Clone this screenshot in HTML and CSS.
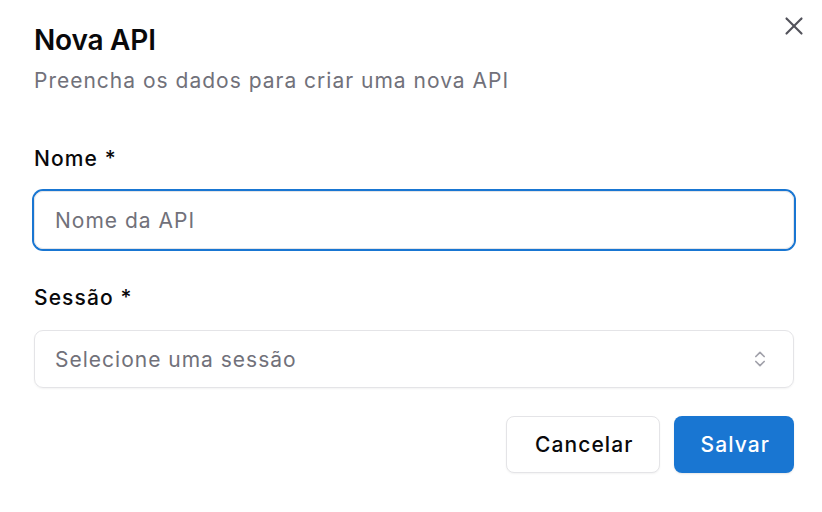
FILE: index.html
```html
<!DOCTYPE html>
<html lang="pt-BR">
<head>
<meta charset="utf-8">
<title>Nova API</title>
<link rel="stylesheet" href="styles.css">
</head>
<body>
<div class="dialog">
  <button class="close" aria-label="Fechar">
    <svg width="30" height="30" viewBox="0 0 24 24" fill="none" stroke="currentColor" stroke-width="1.7" stroke-linecap="round"><path d="M18 6 6 18"/><path d="m6 6 12 12"/></svg>
  </button>
  <header class="head">
    <h2 class="title">Nova API</h2>
    <p class="desc">Preencha os dados para criar uma nova API</p>
  </header>
  <form class="form">
    <div class="field">
      <label class="label">Nome *</label>
      <div class="input focused"><span class="ph">Nome da API</span></div>
    </div>
    <div class="field">
      <label class="label">Sessão *</label>
      <div class="input select"><span class="ph">Selecione uma sessão</span>
        <svg class="chev" width="20" height="20" viewBox="0 0 24 24" fill="none" stroke="currentColor" stroke-width="2" stroke-linecap="round" stroke-linejoin="round"><path d="m7 15 5 5 5-5"/><path d="m7 9 5-5 5 5"/></svg>
      </div>
    </div>
    <div class="actions">
      <button type="button" class="btn outline">Cancelar</button>
      <button type="button" class="btn primary">Salvar</button>
    </div>
  </form>
</div>
</body>
</html>
```
FILE: styles.css
```css
* { box-sizing: border-box; }
html, body { margin: 0; background: #fff; }
body {
  font-family: Inter, "Noto Sans", sans-serif;
  color: #09090b;
}
.dialog {
  position: relative;
  width: 822px;
  height: 512px;
  padding: 23px 28px 0 34px;
}
.close {
  position: absolute;
  top: 11px;
  right: 13px;
  width: 30px;
  height: 30px;
  padding: 0;
  border: 0;
  background: none;
  color: #52525b;
  display: flex;
}
.head { display: flex; flex-direction: column; gap: 10px; }
.title {
  margin: 0;
  font-size: 28px;
  line-height: 34px;
  font-weight: 600;
  letter-spacing: -0.2px;
}
.desc {
  margin: 0;
  font-size: 21px;
  line-height: 28px;
  color: #71717a;
  letter-spacing: 1px;
}
.form {
  margin-top: 50px;
  display: flex;
  flex-direction: column;
  gap: 35px;
}
.field { display: flex; flex-direction: column; gap: 18px; }
.label {
  font-size: 21px;
  line-height: 28px;
  font-weight: 500;
  letter-spacing: 1.1px;
}
.input {
  height: 58px;
  border: 1px solid #e4e4e7;
  border-radius: 9px;
  padding: 0 20px;
  display: flex;
  align-items: center;
  font-size: 21px;
  letter-spacing: 1px;
  box-shadow: 0 1px 2px rgba(0,0,0,0.05);
}
.input.focused {
  border-color: #e4e4e7;
  box-shadow: 0 0 0 2px #1976d2;
}
.ph { color: #71717a; }
.select { justify-content: space-between; padding-right: 23px; }
.chev { color: #a1a1aa; }
.actions {
  margin-top: -7px;
  display: flex;
  justify-content: flex-end;
  gap: 14px;
}
.btn {
  height: 57px;
  border-radius: 8px;
  font-family: inherit;
  font-size: 21px;
  font-weight: 500;
  letter-spacing: 1.1px;
}
.outline {
  padding: 0 26px 0 28px;
  background: #fff;
  color: #09090b;
  border: 1px solid #e4e4e7;
  box-shadow: 0 1px 2px rgba(0,0,0,0.05);
}
.primary {
  padding: 0 24px 0 26px;
  background: #1976d2;
  color: #fff;
  border: 0;
  box-shadow: 0 1px 2px rgba(0,0,0,0.1);
}
```
